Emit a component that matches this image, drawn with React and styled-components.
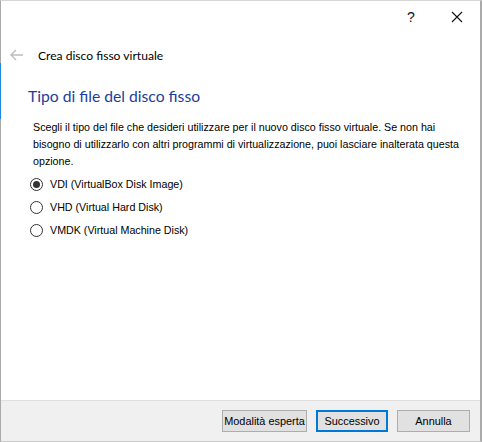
import React, { useState } from "react";
import styled, { createGlobalStyle } from "styled-components";

const GlobalStyle = createGlobalStyle`
    html, body {
        margin: 0;
        padding: 0;
        background: #fff;
    }
    * {
        box-sizing: border-box;
    }
`;

const Window = styled.div`
    width: 482px;
    height: 442px;
    display: flex;
    flex-direction: column;
    background: #fff;
    border-left: 1px solid #aaa;
    border-right: 2px solid #aaa;
    border-bottom: 1px solid #c8c8c8;
    border-top: 1px solid #d6d6d6;
    font-family: "Lato", "Noto Sans", sans-serif;
    color: #000;
    position: relative;
`;

/* blue bit of the desktop showing through at the left edge */
const EdgeGlow = styled.div`
    position: absolute;
    left: -1px;
    top: 62px;
    width: 1px;
    height: 56px;
    background: #1e88e0;
`;

const TitleBar = styled.div`
    height: 31px;
    display: flex;
    justify-content: flex-end;
    align-items: center;
`;

const TitleButton = styled.div`
    width: 46px;
    height: 31px;
    display: flex;
    align-items: center;
    justify-content: center;
    font-family: "Liberation Sans", sans-serif;
    font-size: 14px;
    color: #111;
`;

const Header = styled.div`
    height: 46px;
    display: flex;
    align-items: center;
    padding-left: 9px;
`;

const BackArrow = styled.div`
    width: 28px;
    display: flex;
    align-items: center;
`;

const HeaderTitle = styled.span`
    font-size: 12.1px;
`;

const Content = styled.div`
    flex: 1;
    padding: 0 20px 0 27px;
`;

const Heading = styled.h1`
    margin: 8px 0 0;
    font-weight: normal;
    font-size: 15.7px;
    line-height: 20px;
    color: #1d3d9a;
`;

const Body = styled.div`
    font-family: "Liberation Sans", sans-serif;
    font-size: 10.7px;
`;

const Description = styled(Body)`
    margin: 13px 0 0 5px;
    line-height: 17px;
    white-space: nowrap;
`;

const Options = styled.div`
    margin: 6px 0 0 2px;
    display: flex;
    flex-direction: column;
    gap: 7px;
`;

const OptionRow = styled(Body).attrs({ as: "label" })`
    display: flex;
    align-items: center;
    height: 16px;
    line-height: 16px;
    cursor: default;
`;

const RadioCircle = styled.span`
    width: 13px;
    height: 13px;
    border-radius: 50%;
    border: 1px solid #333;
    background: #fff;
    display: flex;
    align-items: center;
    justify-content: center;
    margin-right: 7px;

    &::after {
        content: "";
        width: 7px;
        height: 7px;
        border-radius: 50%;
        background: #333;
        display: ${(p) => (p.$checked ? "block" : "none")};
    }
`;

const Footer = styled.div`
    height: 41px;
    background: #f0f0f0;
    border-top: 1px solid #dfdfdf;
    display: flex;
    justify-content: flex-end;
    align-items: center;
    gap: 9px;
    padding-right: 10px;
`;

const Button = styled.button`
    height: 22px;
    width: ${(p) => p.$w}px;
    padding: 0;
    background: #e1e1e1;
    border: ${(p) => (p.$default ? "2px solid #0078d7" : "1px solid #adadad")};
    font-family: "Liberation Sans", sans-serif;
    font-size: 10.9px;
    white-space: nowrap;
    color: #000;
`;

const options = [
    { id: "vdi", label: "VDI (VirtualBox Disk Image)" },
    { id: "vhd", label: "VHD (Virtual Hard Disk)" },
    { id: "vmdk", label: "VMDK (Virtual Machine Disk)" },
];

export default function App() {
    const [selected, setSelected] = useState("vdi");

    return (
        <>
            <GlobalStyle />
            <Window>
                <EdgeGlow />
                <TitleBar>
                    <TitleButton>?</TitleButton>
                    <TitleButton>
                        <svg width="12" height="12" viewBox="0 0 12 12">
                            <path d="M1 1 L11 11 M11 1 L1 11" stroke="#111" strokeWidth="1.1" />
                        </svg>
                    </TitleButton>
                </TitleBar>
                <Header>
                    <BackArrow>
                        <svg width="14" height="12" viewBox="0 0 14 12">
                            <path d="M6 1 L1 6 L6 11 M1 6 H13" stroke="#bdbdbd" strokeWidth="1.4" fill="none" />
                        </svg>
                    </BackArrow>
                    <HeaderTitle>Crea disco fisso virtuale</HeaderTitle>
                </Header>
                <Content>
                    <Heading>Tipo di file del disco fisso</Heading>
                    <Description>
                        Scegli il tipo del file che desideri utilizzare per il nuovo disco fisso virtuale. Se non hai
                        <br />
                        bisogno di utilizzarlo con altri programmi di virtualizzazione, puoi lasciare inalterata questa
                        <br />
                        opzione.
                    </Description>
                    <Options>
                        {options.map((o) => (
                            <OptionRow key={o.id} onClick={() => setSelected(o.id)}>
                                <RadioCircle $checked={selected === o.id} />
                                {o.label}
                            </OptionRow>
                        ))}
                    </Options>
                </Content>
                <Footer>
                    <Button $w={85}>Modalità esperta</Button>
                    <Button $w={72} $default>Successivo</Button>
                    <Button $w={73}>Annulla</Button>
                </Footer>
            </Window>
        </>
    );
}
